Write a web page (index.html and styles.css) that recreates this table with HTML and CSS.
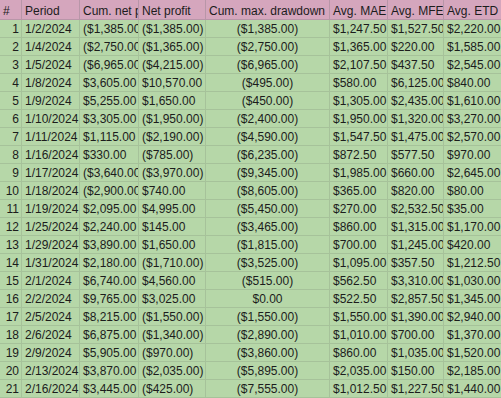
FILE: index.html
```html
<!DOCTYPE html>
<html>
<head>
<meta charset="utf-8">
<link rel="stylesheet" href="styles.css">
</head>
<body>
<table class="sheet">
<colgroup>
<col class="c-num"><col class="c-period"><col class="c-cum"><col class="c-net"><col class="c-dd"><col class="c-mae"><col class="c-mfe"><col class="c-etd">
</colgroup>
<thead>
<tr><th>#</th><th>Period</th><th>Cum. net profit</th><th>Net profit</th><th>Cum. max. drawdown</th><th>Avg. MAE</th><th>Avg. MFE</th><th>Avg. ETD</th></tr>
</thead>
<tbody>
<tr><td class="n">1</td><td>1/2/2024</td><td>($1,385.00)</td><td>($1,385.00)</td><td class="c">($1,385.00)</td><td>$1,247.50</td><td>$1,527.50</td><td>$2,220.00</td></tr>
<tr><td class="n">2</td><td>1/4/2024</td><td>($2,750.00)</td><td>($1,365.00)</td><td class="c">($2,750.00)</td><td>$1,365.00</td><td>$220.00</td><td>$1,585.00</td></tr>
<tr><td class="n">3</td><td>1/5/2024</td><td>($6,965.00)</td><td>($4,215.00)</td><td class="c">($6,965.00)</td><td>$2,107.50</td><td>$437.50</td><td>$2,545.00</td></tr>
<tr><td class="n">4</td><td>1/8/2024</td><td>$3,605.00</td><td>$10,570.00</td><td class="c">($495.00)</td><td>$580.00</td><td>$6,125.00</td><td>$840.00</td></tr>
<tr><td class="n">5</td><td>1/9/2024</td><td>$5,255.00</td><td>$1,650.00</td><td class="c">($450.00)</td><td>$1,305.00</td><td>$2,435.00</td><td>$1,610.00</td></tr>
<tr><td class="n">6</td><td>1/10/2024</td><td>$3,305.00</td><td>($1,950.00)</td><td class="c">($2,400.00)</td><td>$1,950.00</td><td>$1,320.00</td><td>$3,270.00</td></tr>
<tr><td class="n">7</td><td>1/11/2024</td><td>$1,115.00</td><td>($2,190.00)</td><td class="c">($4,590.00)</td><td>$1,547.50</td><td>$1,475.00</td><td>$2,570.00</td></tr>
<tr><td class="n">8</td><td>1/16/2024</td><td>$330.00</td><td>($785.00)</td><td class="c">($6,235.00)</td><td>$872.50</td><td>$577.50</td><td>$970.00</td></tr>
<tr><td class="n">9</td><td>1/17/2024</td><td>($3,640.00)</td><td>($3,970.00)</td><td class="c">($9,345.00)</td><td>$1,985.00</td><td>$660.00</td><td>$2,645.00</td></tr>
<tr><td class="n">10</td><td>1/18/2024</td><td>($2,900.00)</td><td>$740.00</td><td class="c">($8,605.00)</td><td>$365.00</td><td>$820.00</td><td>$80.00</td></tr>
<tr><td class="n">11</td><td>1/19/2024</td><td>$2,095.00</td><td>$4,995.00</td><td class="c">($5,450.00)</td><td>$270.00</td><td>$2,532.50</td><td>$35.00</td></tr>
<tr><td class="n">12</td><td>1/25/2024</td><td>$2,240.00</td><td>$145.00</td><td class="c">($3,465.00)</td><td>$860.00</td><td>$1,315.00</td><td>$1,170.00</td></tr>
<tr><td class="n">13</td><td>1/29/2024</td><td>$3,890.00</td><td>$1,650.00</td><td class="c">($1,815.00)</td><td>$700.00</td><td>$1,245.00</td><td>$420.00</td></tr>
<tr><td class="n">14</td><td>1/31/2024</td><td>$2,180.00</td><td>($1,710.00)</td><td class="c">($3,525.00)</td><td>$1,095.00</td><td>$357.50</td><td>$1,212.50</td></tr>
<tr><td class="n">15</td><td>2/1/2024</td><td>$6,740.00</td><td>$4,560.00</td><td class="c">($515.00)</td><td>$562.50</td><td>$3,310.00</td><td>$1,030.00</td></tr>
<tr><td class="n">16</td><td>2/2/2024</td><td>$9,765.00</td><td>$3,025.00</td><td class="c">$0.00</td><td>$522.50</td><td>$2,857.50</td><td>$1,345.00</td></tr>
<tr><td class="n">17</td><td>2/5/2024</td><td>$8,215.00</td><td>($1,550.00)</td><td class="c">($1,550.00)</td><td>$1,550.00</td><td>$1,390.00</td><td>$2,940.00</td></tr>
<tr><td class="n">18</td><td>2/6/2024</td><td>$6,875.00</td><td>($1,340.00)</td><td class="c">($2,890.00)</td><td>$1,010.00</td><td>$700.00</td><td>$1,370.00</td></tr>
<tr><td class="n">19</td><td>2/9/2024</td><td>$5,905.00</td><td>($970.00)</td><td class="c">($3,860.00)</td><td>$860.00</td><td>$1,035.00</td><td>$1,520.00</td></tr>
<tr><td class="n">20</td><td>2/13/2024</td><td>$3,870.00</td><td>($2,035.00)</td><td class="c">($5,895.00)</td><td>$2,035.00</td><td>$150.00</td><td>$2,185.00</td></tr>
<tr><td class="n">21</td><td>2/16/2024</td><td>$3,445.00</td><td>($425.00)</td><td class="c">($7,555.00)</td><td>$1,012.50</td><td>$1,227.50</td><td>$1,440.00</td></tr>
</tbody>
</table>
</body>
</html>
```
FILE: styles.css
```css
html, body {
  margin: 0;
  padding: 0;
  background: #b6d7a8;
  overflow: hidden;
}
.sheet {
  table-layout: fixed;
  border-collapse: separate;
  border-spacing: 0;
  width: 526px;
  font-family: "Liberation Sans", Arial, sans-serif;
  font-size: 12px;
  color: #1c1c1c;
}
.c-num { width: 22px; }
.c-period { width: 58px; }
.c-cum { width: 59px; }
.c-net { width: 67px; }
.c-dd { width: 124px; }
.c-mae { width: 58px; }
.c-mfe { width: 56px; }
.c-etd { width: 82px; }
.sheet th, .sheet td {
  white-space: nowrap;
  overflow: hidden;
  text-align: left;
  font-weight: normal;
  padding: 0 0 0 3px;
  border-right: 1px solid #a6c29a;
  border-bottom: 1px solid #a6c29a;
}
.sheet th {
  background: #d5a6bd;
  height: 16px;
  line-height: 16px;
  padding-top: 3px;
  border-color: #b896a8;
}
.sheet td {
  background: #b6d7a8;
  height: 15px;
  line-height: 15px;
  padding-top: 2px;
}
.sheet td.n {
  text-align: right;
  padding: 2px 2px 0 0;
}
.sheet td.c {
  text-align: center;
  padding-left: 0;
}
```
